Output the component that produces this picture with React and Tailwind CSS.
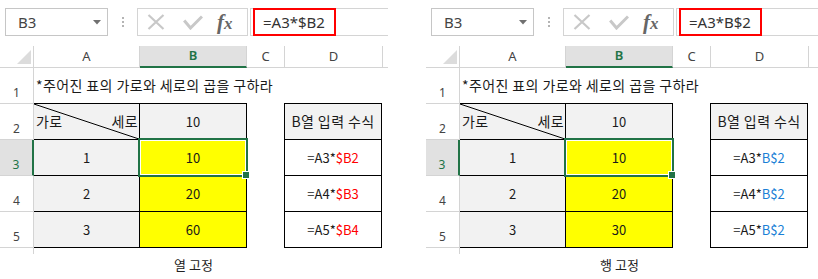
import React from "react";

const UI = "font-['Noto_Sans',sans-serif]";
const KR = "font-['Noto_Sans_CJK_KR','Noto_Sans',sans-serif]";

function XIcon() {
  return (
    <svg width="18" height="16" viewBox="0 0 18 16" className="block">
      <path d="M1.5 1 L16.5 15 M16.5 1 L1.5 15" stroke="#c8c8c8" strokeWidth="2.2" fill="none" />
    </svg>
  );
}

function CheckIcon() {
  return (
    <svg width="20" height="15" viewBox="0 0 20 15" className="block">
      <path d="M1.2 5.5 L7.5 13 L19 1.5" stroke="#c8c8c8" strokeWidth="3" fill="none" />
    </svg>
  );
}

function Panel({ className, formula, refClass, values, refs, caption }) {
  return (
    <div className={`flex flex-col ${className}`}>
      {/* formula bar */}
      <div className="mt-[8px] flex h-[28px]">
        <div
          className={`ml-[5px] flex w-[103px] items-center justify-between border border-[#c6c6c6] pl-[12px] pr-[6px] text-[15px] text-[#444] ${UI}`}
        >
          <span>B3</span>
          <svg width="8" height="5" viewBox="0 0 8 5" className="block">
            <path d="M0 0 H8 L4 4.5 Z" fill="#707070" />
          </svg>
        </div>
        <div className="flex w-[29px] flex-col items-center justify-center gap-[2px]">
          <span className="h-[2px] w-[2px] bg-[#b4b4b4]" />
          <span className="h-[2px] w-[2px] bg-[#b4b4b4]" />
          <span className="h-[2px] w-[2px] bg-[#b4b4b4]" />
        </div>
        <div className="flex w-[111px] items-center border border-[#d4d4d4] pl-[9px]">
          <XIcon />
          <span className="ml-[18px]">
            <CheckIcon />
          </span>
          <span className="ml-[14px] font-['Liberation_Serif',serif] text-[21px] font-bold italic leading-none text-[#666]">
            f<span className="text-[17px]">x</span>
          </span>
        </div>
        <div className="relative ml-[2px] flex-1 border-y border-l border-[#d4d4d4]">
          <div
            className={`absolute -top-px -bottom-px left-[2px] flex w-[83px] items-center border-2 border-[#ff0000] pl-[8px] text-[15px] text-[#333] ${UI}`}
          >
            {formula}
          </div>
        </div>
      </div>

      {/* column headers */}
      <div className={`mt-[10px] flex h-[22px] text-[13px] text-[#444] ${UI}`}>
        <div className="flex w-[34px] items-end justify-end border-r border-b border-[#d4d4d4] pr-[2px] pb-[3px]">
          <svg width="14" height="14" viewBox="0 0 14 14" className="block">
            <polygon points="14,0 14,14 0,14" fill="#dcdcdc" />
          </svg>
        </div>
        <div className="flex w-[106px] items-center justify-center border-r border-b border-[#d4d4d4]">A</div>
        <div className="flex w-[107px] items-center justify-center border-r border-b-2 border-[#d4d4d4] border-b-[#217346] bg-[#e1e1e1] font-semibold text-[#217346]">
          B
        </div>
        <div className="flex w-[38px] items-center justify-center border-r border-b border-[#d4d4d4]">C</div>
        <div className="flex w-[98px] items-center justify-center border-r border-b border-[#d4d4d4]">D</div>
        <div className="flex-1 border-b border-[#d4d4d4]" />
      </div>

      {/* body */}
      <div className="flex">
        <div className={`flex w-[34px] flex-col text-[12px] leading-[14px] text-[#444] ${UI}`}>
          <div className="flex h-[36px] items-end justify-center border-r border-b border-[#d4d4d4] pb-[3px]">1</div>
          <div className="flex h-[36px] items-end justify-center border-r border-b border-[#d4d4d4] pb-[3px]">2</div>
          <div className="flex h-[36px] items-end justify-center border-r-2 border-b border-[#d4d4d4] border-r-[#217346] bg-[#e1e1e1] pb-[3px] text-[#217346]">
            3
          </div>
          <div className="flex h-[36px] items-end justify-center border-r border-b border-[#d4d4d4] pb-[3px]">4</div>
          <div className="flex h-[36px] items-end justify-center border-r border-b border-[#d4d4d4] pb-[3px]">5</div>
          <div className="h-[6px] border-r border-[#d4d4d4]" />
        </div>

        <div className="flex flex-1 flex-col">
          <div className={`flex h-[35px] items-center pl-[2px] text-[14px] tracking-[0.4px] text-[#1a1a1a] ${KR}`}>
            *주어진 표의 가로와 세로의 곱을 구하라
          </div>
          <div className={`flex text-[13px] text-[#1a1a1a] ${KR}`}>
            {/* A-B table */}
            <div className="flex w-[213px] flex-col border-t border-black">
              <div className="flex h-[36px] border-b border-black">
                <div className="relative flex w-[106px] items-center justify-between border-r border-black bg-[#f2f2f2] pl-[2px] pr-[1px] text-[14px] tracking-[0.4px]">
                  <svg
                    className="absolute inset-0 h-full w-full"
                    viewBox="0 0 100 100"
                    preserveAspectRatio="none"
                  >
                    <line x1="0" y1="0" x2="100" y2="100" stroke="#000" strokeWidth="1" vectorEffect="non-scaling-stroke" />
                  </svg>
                  <span>가로</span>
                  <span>세로</span>
                </div>
                <div className="flex w-[107px] items-center justify-center border-r border-black bg-[#f2f2f2]">10</div>
              </div>
              <div className="flex h-[36px] border-b border-black">
                <div className="flex w-[106px] items-center justify-center border-r border-black bg-[#f2f2f2]">1</div>
                <div className="relative flex w-[107px] items-center justify-center border-r border-black bg-[#ffff00]">
                  {values[0]}
                  <div className="absolute -inset-[2px] border-2 border-[#217346] shadow-[inset_0_0_0_1px_#fff]">
                    <div className="absolute -right-[4px] -bottom-[4px] h-[8px] w-[8px] border border-white bg-[#217346]" />
                  </div>
                </div>
              </div>
              <div className="flex h-[36px] border-b border-black">
                <div className="flex w-[106px] items-center justify-center border-r border-black bg-[#f2f2f2]">2</div>
                <div className="flex w-[107px] items-center justify-center border-r border-black bg-[#ffff00]">{values[1]}</div>
              </div>
              <div className="flex h-[36px] border-b border-black">
                <div className="flex w-[106px] items-center justify-center border-r border-black bg-[#f2f2f2]">3</div>
                <div className="flex w-[107px] items-center justify-center border-r border-black bg-[#ffff00]">{values[2]}</div>
              </div>
            </div>

            {/* D table */}
            <div className="ml-[37px] flex w-[98px] flex-col border-x border-t border-black">
              <div className="flex h-[36px] items-center justify-center border-b border-black bg-[#f2f2f2] text-[14px] tracking-[0.4px]">
                B열 입력 수식
              </div>
              {refs.map(([a, r]) => (
                <div key={a} className="flex h-[36px] items-center justify-center border-b border-black bg-white">
                  <span>{a}</span>
                  <span className={refClass}>{r}</span>
                </div>
              ))}
            </div>
          </div>
          <div className={`mt-[8px] ml-[106px] w-[107px] text-center text-[13px] leading-[18px] text-[#222] ${KR}`}>
            {caption}
          </div>
        </div>
      </div>
    </div>
  );
}

export default function App() {
  return (
    <div className="flex h-[279px] w-[818px] gap-[38px] overflow-hidden bg-white">
      <Panel
        className="w-[388px]"
        formula="=A3*$B2"
        refClass="text-[#ff0000]"
        values={["10", "20", "60"]}
        refs={[
          ["=A3*", "$B2"],
          ["=A4*", "$B3"],
          ["=A5*", "$B4"],
        ]}
        caption="열 고정"
      />
      <Panel
        className="w-[392px]"
        formula="=A3*B$2"
        refClass="text-[#1b7fd6]"
        values={["10", "20", "30"]}
        refs={[
          ["=A3*", "B$2"],
          ["=A4*", "B$2"],
          ["=A5*", "B$2"],
        ]}
        caption="행 고정"
      />
    </div>
  );
}
